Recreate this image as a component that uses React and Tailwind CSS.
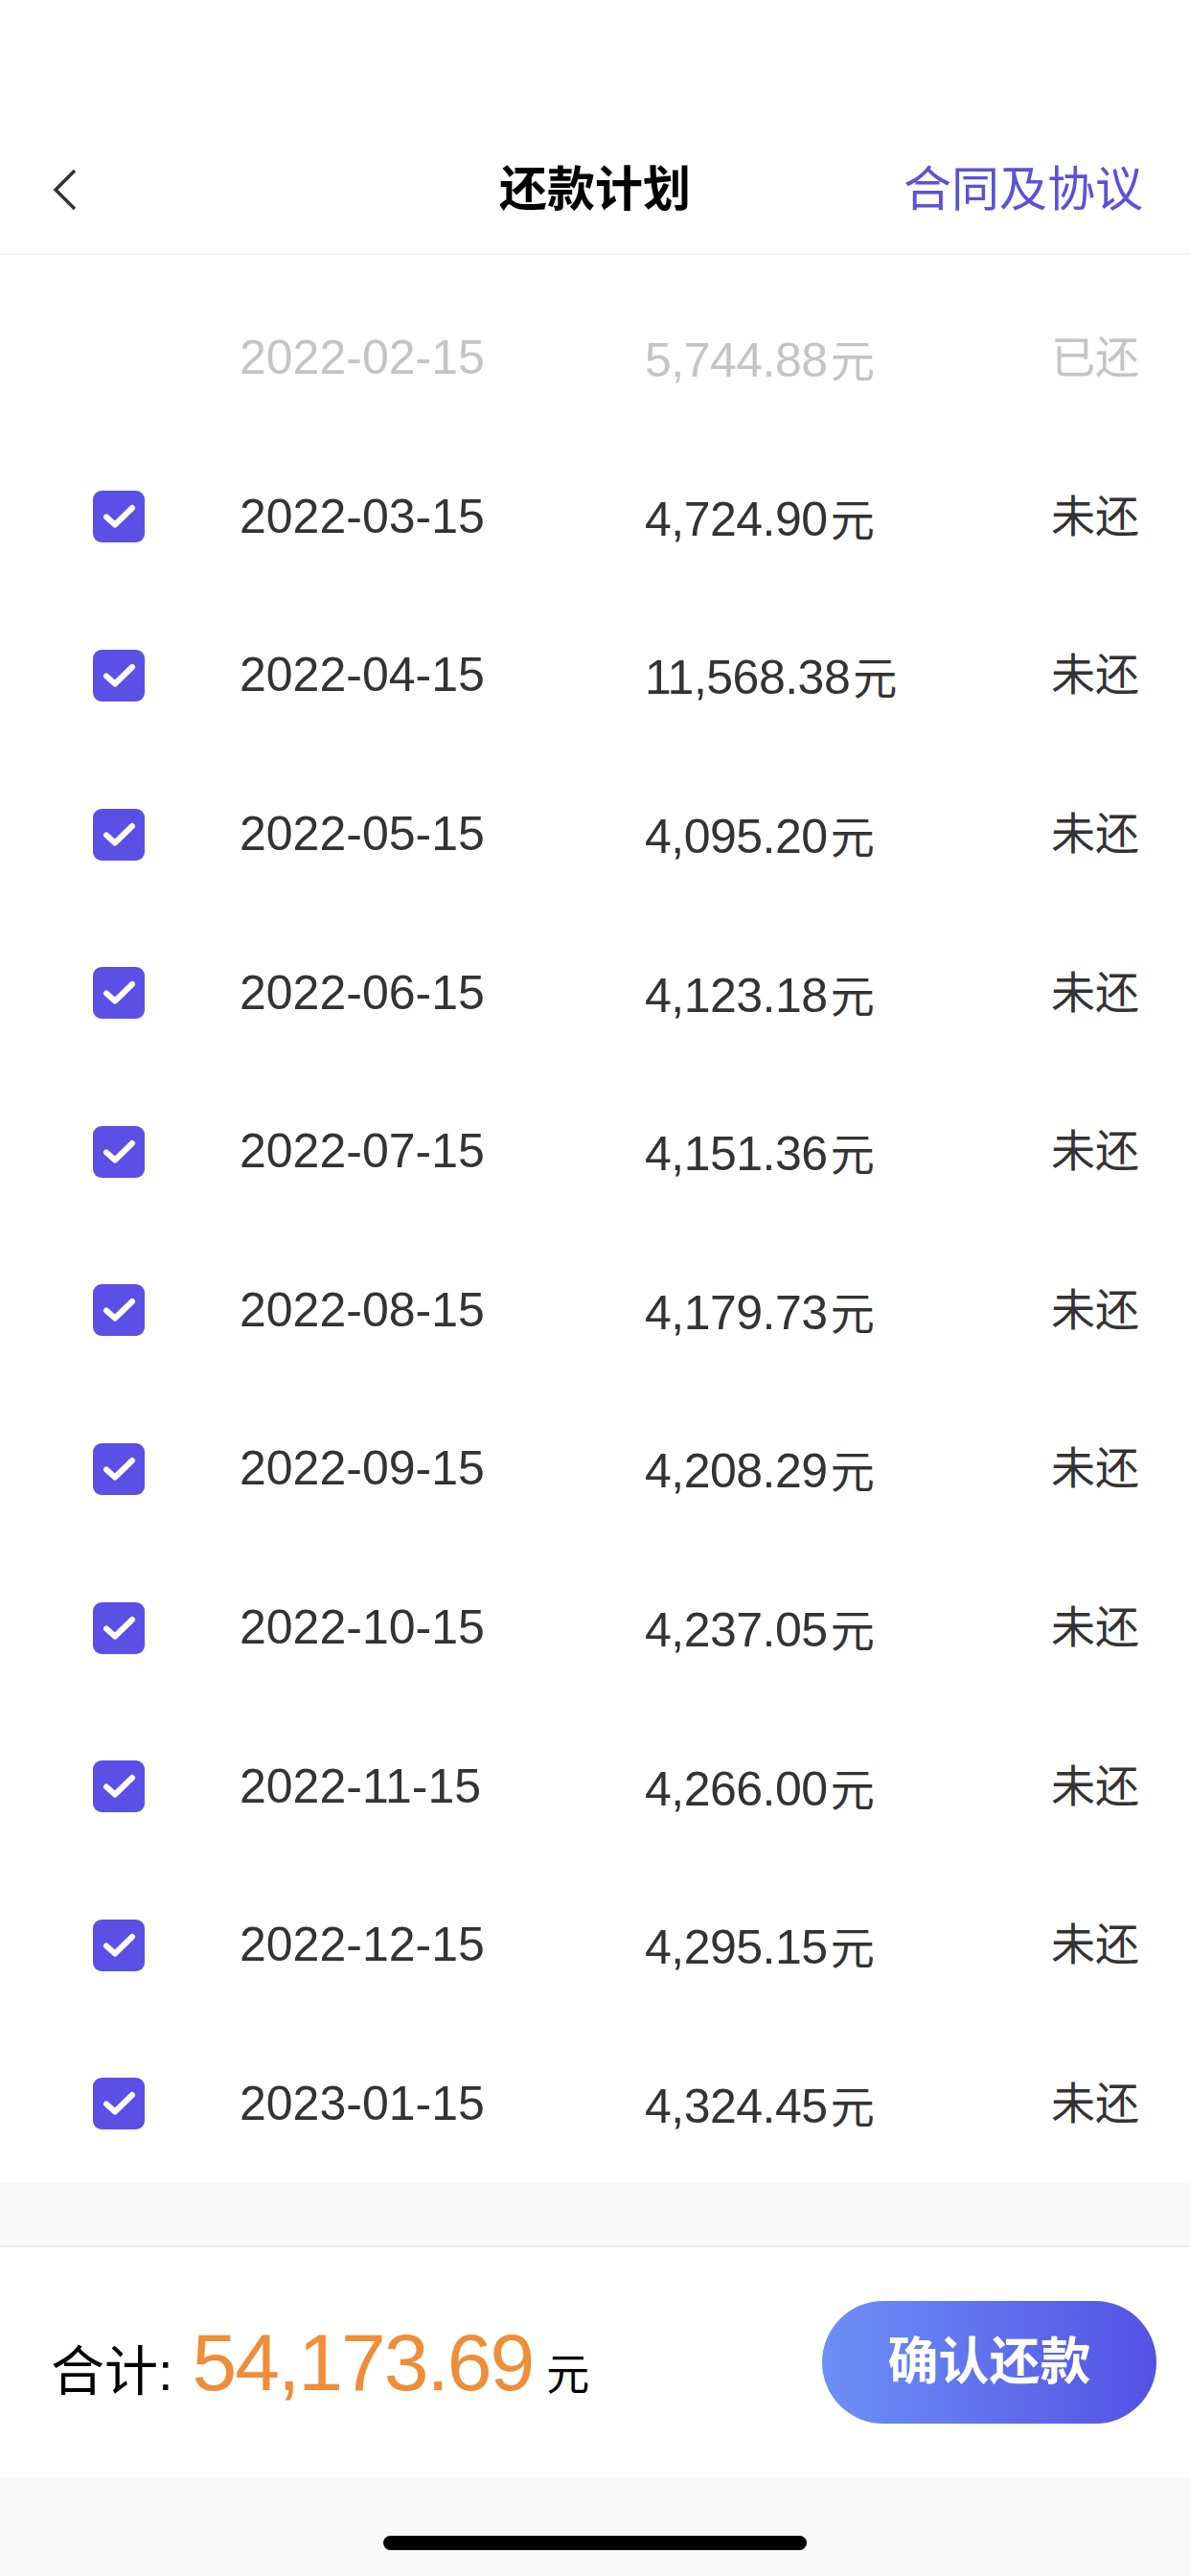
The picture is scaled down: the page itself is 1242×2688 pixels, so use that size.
import React from 'react';

const font = { fontFamily: '"Liberation Sans", "Noto Sans CJK SC", sans-serif' };

const plans = [
  { date: '2022-02-15', amount: '5,744.88', paid: true },
  { date: '2022-03-15', amount: '4,724.90' },
  { date: '2022-04-15', amount: '11,568.38' },
  { date: '2022-05-15', amount: '4,095.20' },
  { date: '2022-06-15', amount: '4,123.18' },
  { date: '2022-07-15', amount: '4,151.36' },
  { date: '2022-08-15', amount: '4,179.73' },
  { date: '2022-09-15', amount: '4,208.29' },
  { date: '2022-10-15', amount: '4,237.05' },
  { date: '2022-11-15', amount: '4,266.00' },
  { date: '2022-12-15', amount: '4,295.15' },
  { date: '2023-01-15', amount: '4,324.45' },
];

// Checked box
function CheckBox() {
  return (
    <div className="w-[54px] h-[54px] rounded-[9px] bg-[#5a50e6]">
      <svg width="54" height="54" viewBox="0 0 54 54" fill="none">
        <path d="M14 27.5 L23 35.5 L41 18" stroke="white" strokeWidth="6" strokeLinecap="round" strokeLinejoin="round" />
      </svg>
    </div>
  );
}

function PlanRow({ date, amount, paid }) {
  const color = paid ? 'text-[#c4c4c4]' : 'text-[#333333]';
  return (
    <div className="h-[165.6px] flex items-center pl-[97px] pr-[53px]">
      <div className="w-[54px] shrink-0">{!paid && <CheckBox />}</div>
      <div className={`ml-[99px] w-[423px] shrink-0 text-[50px] ${color}`}>{date}</div>
      <div className={`flex-1 flex items-baseline pt-[6px] ${color}`}>
        <span className="text-[50px] tracking-[-0.5px]">{amount}</span>
        <span className="text-[46px] ml-[3px]">元</span>
      </div>
      <div className={`text-[46px] ${color}`}>{paid ? '已还' : '未还'}</div>
    </div>
  );
}

export default function App() {
  return (
    <div className="w-[1242px] h-[2688px] bg-white flex flex-col" style={font}>
      {/* Header */}
      <div className="h-[132px]" />
      <div className="h-[134px] grid grid-cols-3 items-center border-b-2 border-[#f2f2f2]">
        <div className="pl-[55px]">
          <svg width="26" height="44" viewBox="0 0 26 44" fill="none">
            <path d="M23 2 L3 22 L23 42" stroke="#333333" strokeWidth="3.5" />
          </svg>
        </div>
        <div className="text-center text-[50px] font-semibold text-black">还款计划</div>
        <div className="text-right pr-[49px] text-[50px] text-[#5a52d8]">合同及协议</div>
      </div>

      {/* List */}
      <div className="pt-[25px]">
        {plans.map((p) => (
          <PlanRow key={p.date} {...p} />
        ))}
      </div>

      <div className="h-[67px] bg-[#f8f8f8] border-b-2 border-[#ececec]" />

      {/* Footer */}
      <div className="h-[240px] flex items-center justify-between pl-[53px] pr-[35px]">
        <div className="flex items-baseline">
          <span className="text-[56px] text-black">合计:</span>
          <span className="text-[84px] tracking-[-2px] text-[#ef8d38] ml-[20px]">54,173.69</span>
          <span className="text-[45px] text-black ml-[14px]">元</span>
        </div>
        <button className="w-[349px] h-[128px] rounded-full bg-gradient-to-r from-[#6e8ff6] to-[#5550e4] text-white text-[53px] font-semibold">
          确认还款
        </button>
      </div>

      <div className="flex-1 bg-[#f8f8f8] flex justify-center pt-[61px]">
        <div className="w-[442px] h-[15px] rounded-full bg-black" />
      </div>
    </div>
  );
}
